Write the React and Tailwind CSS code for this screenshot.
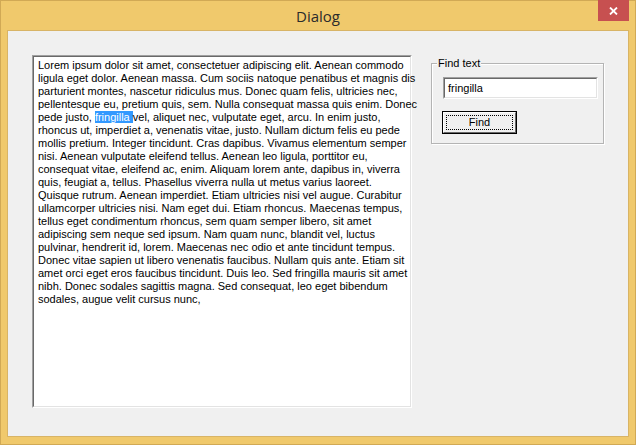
import React from 'react';

const lines = [
  'Lorem ipsum dolor sit amet, consectetuer adipiscing elit. Aenean commodo',
  'ligula eget dolor. Aenean massa. Cum sociis natoque penatibus et magnis dis',
  'parturient montes, nascetur ridiculus mus. Donec quam felis, ultricies nec,',
  'pellentesque eu, pretium quis, sem. Nulla consequat massa quis enim. Donec',
  null, // line with the selection
  'rhoncus ut, imperdiet a, venenatis vitae, justo. Nullam dictum felis eu pede',
  'mollis pretium. Integer tincidunt. Cras dapibus. Vivamus elementum semper',
  'nisi. Aenean vulputate eleifend tellus. Aenean leo ligula, porttitor eu,',
  'consequat vitae, eleifend ac, enim. Aliquam lorem ante, dapibus in, viverra',
  'quis, feugiat a, tellus. Phasellus viverra nulla ut metus varius laoreet.',
  'Quisque rutrum. Aenean imperdiet. Etiam ultricies nisi vel augue. Curabitur',
  'ullamcorper ultricies nisi. Nam eget dui. Etiam rhoncus. Maecenas tempus,',
  'tellus eget condimentum rhoncus, sem quam semper libero, sit amet',
  'adipiscing sem neque sed ipsum. Nam quam nunc, blandit vel, luctus',
  'pulvinar, hendrerit id, lorem. Maecenas nec odio et ante tincidunt tempus.',
  'Donec vitae sapien ut libero venenatis faucibus. Nullam quis ante. Etiam sit',
  'amet orci eget eros faucibus tincidunt. Duis leo. Sed fringilla mauris sit amet',
  'nibh. Donec sodales sagittis magna. Sed consequat, leo eget bibendum',
  'sodales, augue velit cursus nunc,',
];

function TextBox() {
  return (
    <div className="w-[380px] h-[353px] border border-t-[#a0a0a0] border-l-[#a0a0a0] border-b-white border-r-white">
      <div className="h-full bg-white border border-t-[#696969] border-l-[#696969] border-b-[#e3e3e3] border-r-[#e3e3e3] pl-[4px] pt-[2px] text-[11px] leading-[13px] text-black font-['Liberation_Sans',sans-serif]">
        {lines.map((line, i) =>
          line === null ? (
            <div key={i} className="whitespace-pre">
              pede justo,{' '}
              <span className="bg-[#3399ff] text-white">fringilla </span>
              vel, aliquet nec, vulputate eget, arcu. In enim justo,
            </div>
          ) : (
            <div key={i} className="whitespace-pre">{line}</div>
          )
        )}
      </div>
    </div>
  );
}

function FindGroup() {
  return (
    <div className="relative mt-[8px] w-[173px] h-[81px] border border-[#b4b4b4] shadow-[inset_1px_1px_0_#fff,1px_1px_0_#fff] pl-[11px] pt-[13px] font-['Liberation_Sans',sans-serif] text-[11px]">
      <span className="absolute left-[5px] top-[-7px] px-[1px] bg-[#f0f0f0] leading-[13px] text-black">Find text</span>
      <div className="w-[155px] h-[22px] border border-t-[#a0a0a0] border-l-[#a0a0a0] border-b-white border-r-white">
        <div className="h-full bg-white border border-t-[#696969] border-l-[#696969] border-b-[#e3e3e3] border-r-[#e3e3e3] pl-[3px] flex items-center text-black">
          fringilla
        </div>
      </div>
      <div className="-ml-[1px] mt-[12px] w-[75px] h-[23px] border border-black">
        <div className="h-full border border-t-white border-l-white border-b-[#696969] border-r-[#696969] p-[2px]">
          <div className="h-full border border-dotted border-black flex items-center justify-center text-black">
            Find
          </div>
        </div>
      </div>
    </div>
  );
}

export default function App() {
  return (
    <div className="w-[636px] h-[445px] bg-[#f0c96c] border border-[#d1a955] flex flex-col">
      <div className="relative h-[29px] flex items-center justify-center">
        <span className="text-[15px] text-[#2b2b2b] font-['Open_Sans',sans-serif] mt-[1px]">Dialog</span>
        <div className="absolute top-[-1px] right-[6px] w-[31px] h-[21px] bg-[#c75050] flex items-center justify-center">
          <svg width="9" height="8" viewBox="0 0 9 8">
            <path d="M1 0.5 L8 7.5 M8 0.5 L1 7.5" stroke="#fff" strokeWidth="1.8" />
          </svg>
        </div>
      </div>
      <div className="flex-1 mx-[6px] mb-[7px] bg-[#f0f0f0] border border-[#d8b466] flex items-start gap-[19px] pl-[24px] pt-[24px]">
        <TextBox />
        <FindGroup />
      </div>
    </div>
  );
}
